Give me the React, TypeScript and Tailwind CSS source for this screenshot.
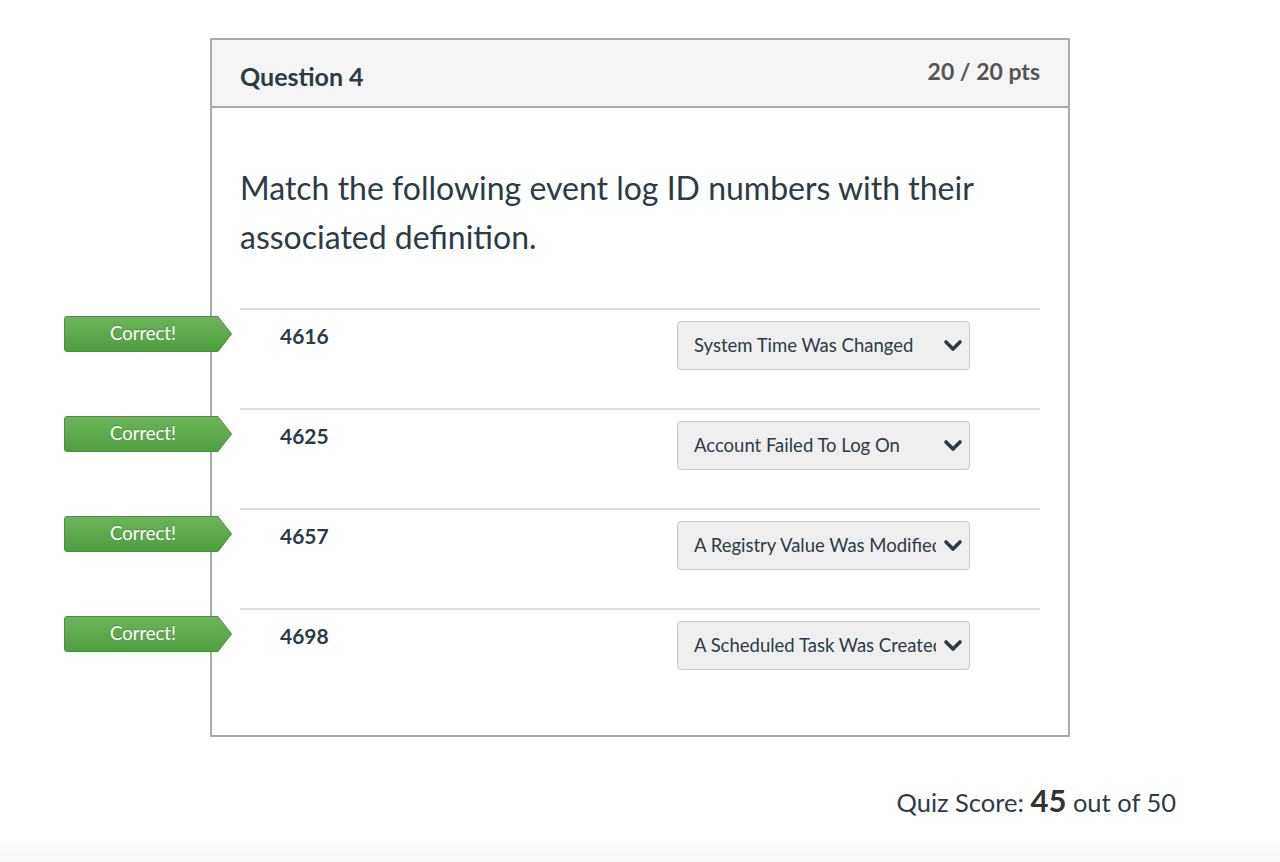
import React from 'react';

const rows = [
  { id: '4616', answer: 'System Time Was Changed' },
  { id: '4625', answer: 'Account Failed To Log On' },
  { id: '4657', answer: 'A Registry Value Was Modified' },
  { id: '4698', answer: 'A Scheduled Task Was Created' },
];

const CorrectBadge: React.FC = () => (
  <div className="absolute left-[-176px] top-[6px] h-[36px] w-[168px]">
    <svg className="absolute inset-0" width="168" height="36" viewBox="0 0 168 36">
      <defs>
        <linearGradient id="g" x1="0" y1="0" x2="0" y2="1">
          <stop offset="0" stopColor="#6cb65a" />
          <stop offset="1" stopColor="#509c40" />
        </linearGradient>
      </defs>
      <path d="M3 0.5 H154 L167.5 18 L154 35.5 H3 Q0.5 35.5 0.5 33 V3 Q0.5 0.5 3 0.5 Z" fill="url(#g)" stroke="#4a9239" strokeWidth="1" />
    </svg>
    <div className="relative flex h-full w-[158px] items-center justify-center text-[18.5px] text-white [text-shadow:0_-1px_0_rgba(0,0,0,0.2)]">
      Correct!
    </div>
  </div>
);

const Select: React.FC<{ value: string }> = ({ value }) => (
  <div className="mt-[11px] flex h-[49px] w-[293px] items-center rounded-[4px] border border-[#c7c9cb] bg-[#efefef] pl-[16px] pr-[6px]">
    <span className="w-[242px] overflow-hidden whitespace-nowrap text-[18.5px] text-[#2d3b45]">{value}</span>
    <svg className="ml-auto" width="20" height="14" viewBox="0 0 20 14">
      <polyline points="3,3 10,10 17,3" fill="none" stroke="#2d3b45" strokeWidth="3.6" strokeLinecap="round" strokeLinejoin="round" />
    </svg>
  </div>
);

export default function App() {
  return (
    <div className="relative min-h-[862px] bg-white font-['Lato','Open_Sans',sans-serif] text-[#2d3b45]">
      <div className="ml-[210px] w-[860px] pt-[38px]">
        <div className="border-2 border-[#aaaaaa] bg-white">
          <div className="flex h-[68px] items-start justify-between border-b-2 border-[#aaaaaa] bg-[#f5f5f5] px-[28px]">
            <h2 className="mt-[21px] text-[25px] font-bold leading-[30px] text-[#2d3b45]">Question 4</h2>
            <div className="mt-[17px] text-[23px] font-bold leading-[28px] text-[#555555]">20 / 20 pts</div>
          </div>
          <div className="px-[28px] pb-[27px] pt-[55px]">
            <p className="text-[32px] leading-[49px] text-[#2d3b45]">
              Match the following event log ID numbers with their associated definition.
            </p>
            <div className="mt-[47px]">
              {rows.map((r) => (
                <div key={r.id} className="relative flex h-[100px] border-t-2 border-[#dddddd]">
                  <CorrectBadge />
                  <div className="ml-[40px] mt-[13px] w-[397px] text-[21px] font-bold leading-[26px] text-[#2d3b45]">{r.id}</div>
                  <Select value={r.answer} />
                </div>
              ))}
            </div>
          </div>
        </div>
      </div>
      <div className="mr-[104px] mt-[40px] flex items-baseline justify-end text-[25.5px] text-[#2d3b45]">
        <span>Quiz Score:&nbsp;</span>
        <span className="text-[31px] font-bold text-[#333333]">45</span>
        <span>&nbsp;out of 50</span>
      </div>
      <div className="absolute bottom-0 left-0 h-[26px] w-full bg-gradient-to-b from-white to-[#f7f7f7]" />
    </div>
  );
}
